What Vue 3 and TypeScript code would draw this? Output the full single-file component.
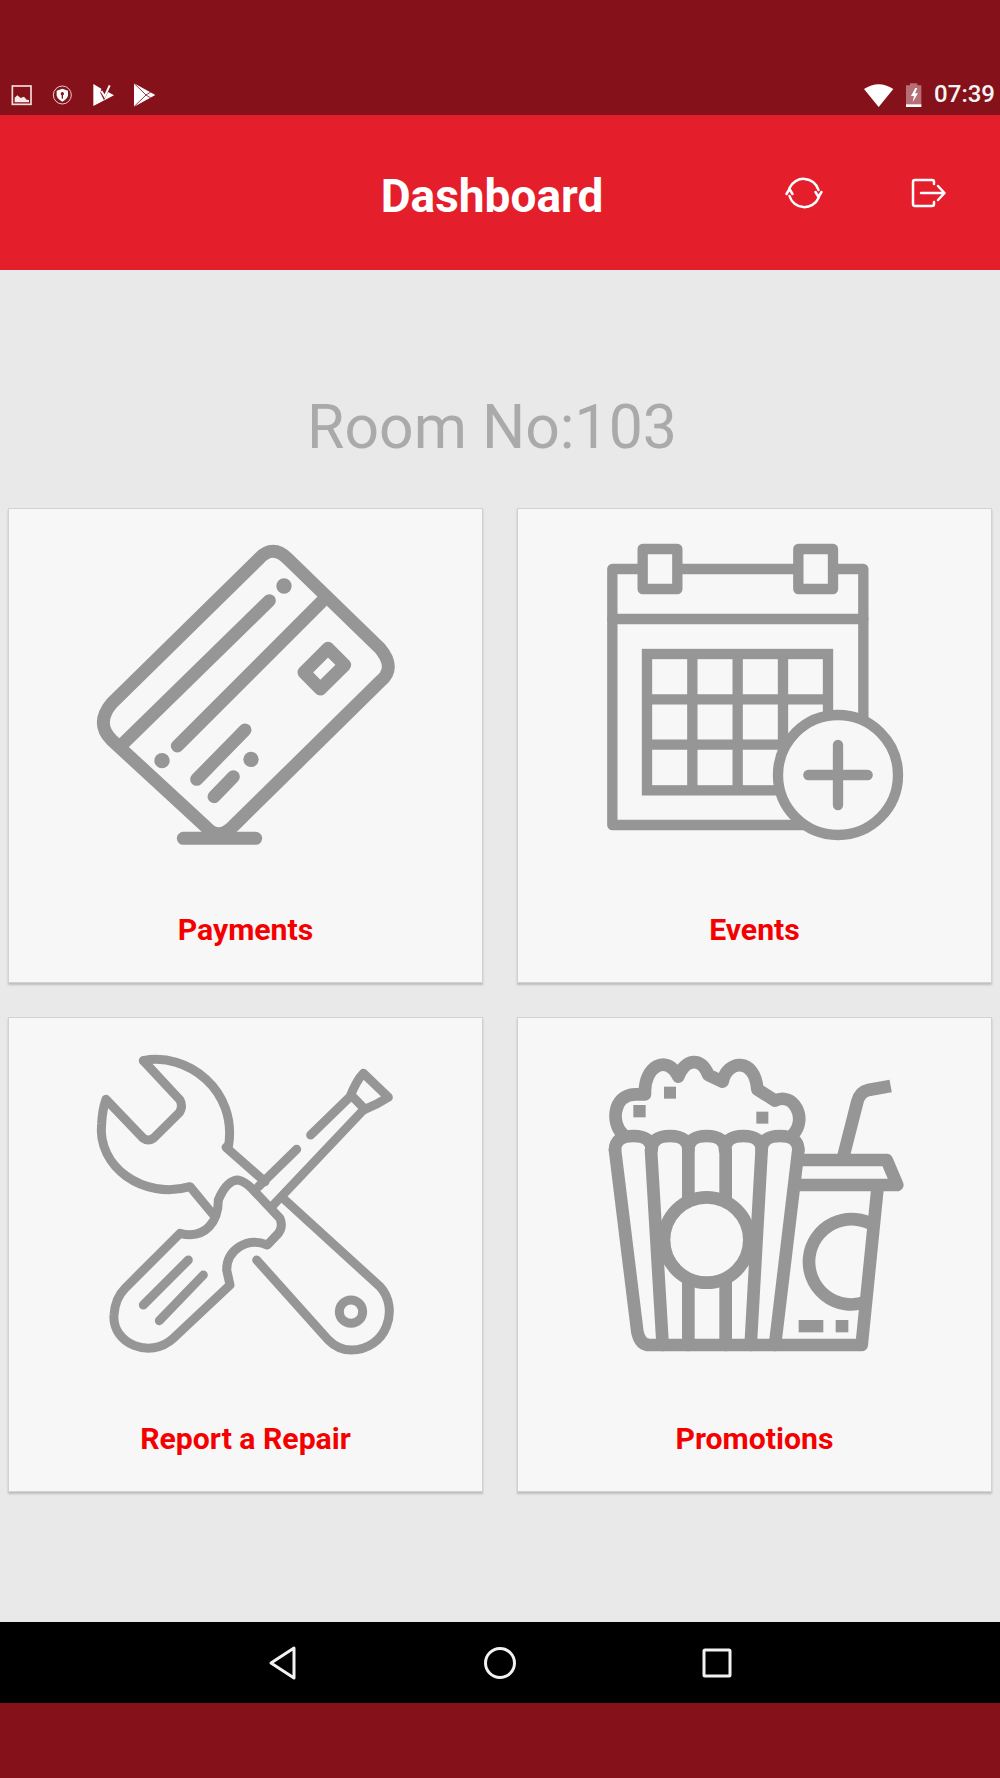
<script setup lang="ts">
interface Tile {
  key: string
  label: string
  viewBox: string
}

// each icon is drawn in its own crop coordinates, the viewBox lines it up in the tile
const tiles: Tile[] = [
  { key: 'payments', label: 'Payments', viewBox: '27 27 1419 1080' },
  { key: 'events', label: 'Events', viewBox: '54 27 1419 1080' },
  { key: 'repair', label: 'Report a Repair', viewBox: '27 24 1419 1080' },
  { key: 'promotions', label: 'Promotions', viewBox: '54 24 1419 1080' }
]

const gridCols = [577, 713, 849]
const gridRows = [598, 734]
</script>

<template>
  <div class="screen">
    <div class="status-bar">
      <svg class="status-left" viewBox="0 60 480 105">
        <rect x="37" y="78" width="56" height="55" fill="none" stroke="#f3dcdc" stroke-width="5" />
        <path d="M44 127 V113 L52 106 L62 114 L72 110 L80 119 L87 120 V127 Z" fill="#f7eaea" />
        <circle cx="187" cy="105" r="27" fill="none" stroke="#e9c9c9" stroke-width="3" />
        <path d="M170 92 L187 86 L204 92 V106 Q202 118 187 125 Q172 118 170 106 Z" fill="#fff" />
        <circle cx="187" cy="101" r="5" fill="#85121a" />
        <rect x="185" y="103" width="4" height="13" fill="#85121a" />
        <path d="M280 72 L304 86 L301 98 L312 121 L324 96 L342 106 L280 138 Z" fill="#fff" />
        <path d="M304 93 L314 109 L329 76" fill="none" stroke="#fff" stroke-width="6" />
        <path d="M402 70 L466 105 L402 140 Z" fill="#fff" />
        <path d="M402 70 L438 105 L402 140 M438 105 L452 96 M438 105 L452 114" fill="none" stroke="#85121a" stroke-width="2.5" />
      </svg>
      <div class="status-right">
        <svg class="status-icons" viewBox="490 60 190 105">
          <path d="M496 87 Q540 58 584 87 L540 141 Z" fill="#fff" />
          <path d="M634 76 V70 H656 V76 H668 V140 H622 V76 Z" fill="#fff" fill-opacity="0.4" />
          <rect x="622" y="133" width="46" height="8" fill="#fff" />
          <path d="M650 84 L637 108 H646 L642 127 L658 100 H649 L656 84 Z" fill="#fff" />
        </svg>
        <span class="clock">07:39</span>
      </div>
    </div>

    <header class="app-bar">
      <h1 class="app-title">Dashboard</h1>
      <div class="actions">
        <svg class="action" viewBox="0 0 40 40" fill="none" stroke="#fff" stroke-width="2.5" stroke-linecap="round" stroke-linejoin="round">
          <path d="M5.5 15 A15.5 15.5 0 0 1 34.5 17" />
          <path d="M34.5 25 A15.5 15.5 0 0 1 5.5 23" />
          <path d="M2.5 21 L5.5 16 L8.5 21" />
          <path d="M31.5 19 L34.5 24 L37.5 19" />
        </svg>
        <svg class="action" viewBox="0 0 40 40" fill="none" stroke="#fff" stroke-width="2.5" stroke-linecap="round" stroke-linejoin="round">
          <path d="M25 11 V9 Q25 7 23 7 H6 Q4 7 4 9 V31 Q4 33 6 33 H23 Q25 33 25 31 V29" />
          <path d="M12 20 H35 M29 13 L35.5 20 L29 27" />
        </svg>
      </div>
    </header>

    <main class="content">
      <h2 class="room">Room No:103</h2>
      <div class="tiles">
        <div v-for="tile in tiles" :key="tile.key" class="tile">
          <svg class="tile-icon" :viewBox="tile.viewBox" fill="none" stroke="#969696" stroke-linecap="round" stroke-linejoin="round">
            <g v-if="tile.key === 'payments'" stroke-width="39">
              <path d="M775 178 L335 610 Q285 670 335 720 L615 978 Q655 1025 700 978 L1140 545 Q1190 505 1140 445 L865 178 Q818 130 775 178 Z" />
              <path d="M550 1015 H767" />
              <path d="M965 305 L532 738" />
              <path d="M808 302 L370 730" />
              <path d="M984 445 L1034 495 L961 567 L912 517 Z" />
              <path d="M735 690 L590 838" />
              <path d="M700 830 L642 890" />
              <g fill="#969696" stroke="none">
                <circle cx="852" cy="258" r="23" />
                <circle cx="486" cy="782" r="23" />
                <circle cx="753" cy="778" r="23" />
              </g>
            </g>

            <g v-else-if="tile.key === 'events'" stroke-width="31">
              <path d="M337 207 H1090 V975 H337 Z" />
              <path d="M337 357 H1090" />
              <rect x="428" y="147" width="104" height="120" fill="#f7f7f7" />
              <rect x="895" y="147" width="104" height="120" fill="#f7f7f7" />
              <g stroke-linecap="butt" stroke-linejoin="miter">
                <rect x="441" y="462" width="543" height="409" />
                <path v-for="x in gridCols" :key="x" :d="`M${x} 462 V871`" />
                <path v-for="y in gridRows" :key="y" :d="`M441 ${y} H984`" />
              </g>
              <circle cx="1014" cy="825" r="180" fill="#f7f7f7" />
              <path d="M1014 735 V915 M925 825 H1103" />
            </g>

            <g v-else-if="tile.key === 'repair'" stroke-width="27">
              <path d="M430 152 C560 125 715 240 685 412 L678 412 L795 515" />
              <path d="M855 570 L1140 830 C1200 895 1160 1020 1053 1020 C1025 1020 1000 1005 985 990 L770 750" />
              <path d="M638 612 L570 530 C430 570 290 470 305 340 Q307 300 318 268 L430 385 Q445 395 460 385 L538 308 Q550 290 540 270 L430 152" />
              <circle cx="1053" cy="905" r="35" />
              <path d="M540 670 C620 690 655 630 655 570 Q680 510 715 510 Q735 515 755 535 L840 625 Q850 650 835 670 L802 705 C740 680 680 720 680 780 L690 825 L520 985 C450 1050 335 1000 342 915 Q345 865 375 835 Z" />
              <path d="M565 750 L430 885" />
              <path d="M610 795 L478 932" />
              <path d="M890 418 L775 530" />
              <path d="M932 375 L1050 260 Q1070 210 1090 190 L1165 262 Q1130 285 1090 300 L820 585" />
              <path d="M1060 262 L1095 298" />
            </g>

            <g v-else stroke-width="38">
              <path d="M368 372 C335 345 335 255 405 253 L435 253 C430 170 500 130 535 200 C555 145 605 140 625 195 L668 215 C680 150 765 140 772 238 L825 272 C880 245 925 325 878 375" />
              <path d="M345 420 Q345 378 400 378 Q455 378 455 420 Q455 378 510 378 Q565 378 565 420 Q565 378 620 378 Q675 378 675 420 Q675 378 730 378 Q785 378 785 420 Q785 378 840 378 Q895 378 895 420" />
              <path d="M345 420 L412 965 Q420 1005 450 1005 H1085 L1133 530" />
              <path d="M453 420 L488 1005 M785 420 L752 1005 M895 420 L825 1005" />
              <path d="M565 420 V1005 M677 420 V1005" />
              <circle cx="620" cy="690" r="128" fill="#f7f7f7" />
              <path d="M895 450 H1160 L1192 525 H895" />
              <path d="M1030 440 L1072 275 Q1080 245 1105 240 L1172 228" stroke-linecap="butt" stroke-linejoin="round" />
              <path d="M1123 647 A128 128 0 1 0 1095 877" stroke-linecap="butt" />
              <g fill="#969696" stroke="none">
                <rect x="400" y="285" width="37" height="37" />
                <rect x="492" y="230" width="36" height="36" />
                <rect x="769" y="305" width="36" height="36" />
                <rect x="896" y="930" width="74" height="37" />
                <rect x="1007" y="930" width="38" height="37" />
              </g>
            </g>
          </svg>
          <div class="tile-label">{{ tile.label }}</div>
        </div>
      </div>
    </main>

    <nav class="nav-bar">
      <svg class="nav-icon" viewBox="0 0 40 40" fill="none" stroke="#f2f2f2" stroke-width="3" stroke-linejoin="round">
        <path d="M31 5 V35 L8 20 Z" />
      </svg>
      <svg class="nav-icon" viewBox="0 0 40 40" fill="none" stroke="#f2f2f2" stroke-width="3">
        <circle cx="20" cy="20" r="14.500" />
      </svg>
      <svg class="nav-icon" viewBox="0 0 40 40" fill="none" stroke="#f2f2f2" stroke-width="3" stroke-linejoin="round">
        <rect x="7" y="7" width="26" height="26" rx="1" />
      </svg>
    </nav>
    <div class="bottom-strip"></div>
  </div>
</template>

<style scoped>
.screen {
  width: 1000px;
  height: 1778px;
  display: flex;
  flex-direction: column;
  background: #e9e9e9;
  font-family: Roboto, "Liberation Sans", sans-serif;
}

.status-bar {
  height: 115px;
  flex: none;
  display: flex;
  justify-content: space-between;
  align-items: flex-end;
  background: #85121a;
}

.status-left {
  width: 160px;
  height: 35px;
}

.status-right {
  display: flex;
  align-items: flex-end;
  gap: 9px;
  padding-right: 5px;
}

.status-icons {
  width: 63.33px;
  height: 35px;
}

.clock {
  color: #f5f5f5;
  font-size: 24px;
  font-weight: 500;
  line-height: 35px;
  padding-bottom: 3px;
}

.app-bar {
  height: 155px;
  flex: none;
  display: grid;
  grid-template-columns: 300px 384px 1fr;
  align-items: center;
  background: #e41e2b;
}

.app-title {
  grid-column: 2;
  margin: 0;
  padding-top: 6px;
  color: #fff;
  font-size: 46px;
  font-weight: 700;
  text-align: center;
}

.actions {
  display: flex;
  gap: 85px;
  padding-left: 100px;
}

.action {
  width: 40px;
  height: 40px;
}

.content {
  flex: 1;
  padding: 126px 8px 0;
}

.room {
  margin: 0 0 48px;
  padding-right: 16px;
  color: #aaaaaa;
  font-size: 60.7px;
  font-weight: 400;
  line-height: 64px;
  text-align: center;
}

.tiles {
  display: grid;
  grid-template-columns: 475px 475px;
  column-gap: 34px;
  row-gap: 34px;
}

.tile {
  box-sizing: border-box;
  height: 475px;
  border: 1px solid #d2d2d2;
  background: #f7f7f7;
  box-shadow: 0 2px 2px #bdbdbd;
}

.tile-icon {
  display: block;
  width: 473px;
  height: 360px;
}

.tile-label {
  padding-top: 41px;
  color: #f40000;
  font-size: 30.2px;
  font-weight: 700;
  line-height: 40px;
  text-align: center;
}

.nav-bar {
  height: 81px;
  flex: none;
  display: flex;
  justify-content: center;
  align-items: center;
  gap: 177px;
  background: #000;
}

.nav-icon {
  width: 40px;
  height: 40px;
}

.bottom-strip {
  height: 75px;
  flex: none;
  background: #85121a;
}
</style>
